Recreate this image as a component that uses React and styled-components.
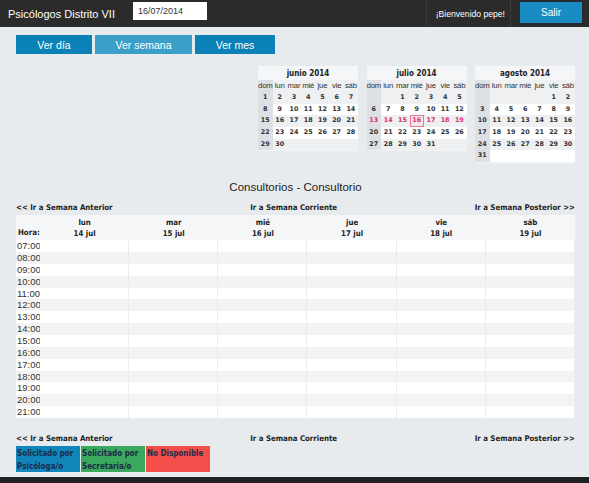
import React from "react";
import styled, { createGlobalStyle, css } from "styled-components";

const GlobalStyle = createGlobalStyle`
  html, body {
    margin: 0;
    padding: 0;
    background: #e8ebee;
    font-family: "Liberation Sans", Arial, sans-serif;
    color: #222;
  }
`;

const months = [
  { title: "junio 2014", offset: 0, days: 30, rows: 5 },
  { title: "julio 2014", offset: 2, days: 31, rows: 5, week: [13, 19], today: 16 },
  { title: "agosto 2014", offset: 5, days: 31, rows: 6 },
];

const weekdays = ["dom", "lun", "mar", "mié", "jue", "vie", "sáb"];

const days = [
  ["lun", "14 jul"],
  ["mar", "15 jul"],
  ["mié", "16 jul"],
  ["jue", "17 jul"],
  ["vie", "18 jul"],
  ["sáb", "19 jul"],
];

const hours = [
  "07:00", "08:00", "09:00", "10:00", "11:00", "12:00", "13:00", "14:00",
  "15:00", "16:00", "17:00", "18:00", "19:00", "20:00", "21:00",
];

const boldSmall = css`
  font-family: "DejaVu Sans", Verdana, sans-serif;
  font-stretch: condensed;
  font-weight: bold;
  font-size: 7.8px;
`;

export default function App() {
  return (
    <Page>
      <GlobalStyle />
      <Header>
        <Brand>Psicólogos Distrito VII</Brand>
        <DateInput defaultValue="16/07/2014" />
        <Welcome>¡Bienvenido pepe!</Welcome>
        <LogoutButton>Salir</LogoutButton>
      </Header>

      <Main>
        <ViewTabs>
          <ViewTab>Ver día</ViewTab>
          <ViewTab $active>Ver semana</ViewTab>
          <ViewTab>Ver mes</ViewTab>
        </ViewTabs>

        <Calendars>
          {months.map((m) => {
            const cells = [];
            for (let i = 0; i < m.rows * 7; i++) {
              const d = i - m.offset + 1;
              cells.push(d >= 1 && d <= m.days ? d : null);
            }
            return (
              <MiniCalendar key={m.title}>
                <CalTitle>{m.title}</CalTitle>
                <CalGrid>
                  {weekdays.map((w) => (
                    <WeekdayCell key={w} $sunday={w === "dom"}>{w}</WeekdayCell>
                  ))}
                  {cells.map((d, i) => {
                    const row = Math.floor(i / 7);
                    const inWeek = m.week && d >= m.week[0] && d <= m.week[1];
                    return (
                      <DayCell
                        key={i}
                        $sunday={i % 7 === 0}
                        $shade={row % 2 === 0}
                        $week={inWeek}
                        $today={d === m.today}
                      >
                        {d}
                      </DayCell>
                    );
                  })}
                </CalGrid>
              </MiniCalendar>
            );
          })}
        </Calendars>

        <SectionTitle>Consultorios - Consultorio</SectionTitle>

        <WeekNav>
          <NavLink>&lt;&lt; Ir a Semana Anterior</NavLink>
          <NavLink>Ir a Semana Corriente</NavLink>
          <NavLink>Ir a Semana Posterior &gt;&gt;</NavLink>
        </WeekNav>

        <Schedule>
          <HeadCell $hour>Hora:</HeadCell>
          {days.map(([name, date]) => (
            <HeadCell key={date}>
              {name}
              <br />
              {date}
            </HeadCell>
          ))}
          {hours.map((h, r) => (
            <React.Fragment key={h}>
              <HourCell $alt={r % 2 === 1}>{h}</HourCell>
              {days.map(([, date]) => (
                <SlotCell key={date} $alt={r % 2 === 1} />
              ))}
            </React.Fragment>
          ))}
        </Schedule>

        <WeekNav $bottom>
          <NavLink>&lt;&lt; Ir a Semana Anterior</NavLink>
          <NavLink>Ir a Semana Corriente</NavLink>
          <NavLink>Ir a Semana Posterior &gt;&gt;</NavLink>
        </WeekNav>

        <Legend>
          <LegendItem $color="#1086bb">Solicitado por Psicóloga/o</LegendItem>
          <LegendItem $color="#3aa95e">Solicitado por Secretaria/o</LegendItem>
          <LegendItem $color="#f44e4b">No Disponible</LegendItem>
        </Legend>
      </Main>

      <Footer />
    </Page>
  );
}

const Page = styled.div`
  display: flex;
  flex-direction: column;
  min-height: 100vh;
`;

const Header = styled.header`
  display: flex;
  align-items: center;
  height: 27px;
  background: #2b2b2b;
  padding-left: 8px;
`;

const Brand = styled.span`
  color: #fff;
  font-size: 11px;
  margin-right: 18px;
`;

const DateInput = styled.input`
  width: 74px;
  height: 18px;
  box-sizing: border-box;
  margin-top: -5px;
  border: none;
  padding: 0 5px;
  font-family: "Liberation Sans", Arial, sans-serif;
  font-size: 9px;
  color: #333;
  background: #fff;
`;

const Welcome = styled.span`
  margin-left: auto;
  align-self: stretch;
  display: flex;
  align-items: center;
  padding: 0 5px 0 9px;
  border-left: 1px solid #3b3b3b;
  border-right: 1px solid #3b3b3b;
  color: #fff;
  font-size: 8.6px;
`;

const LogoutButton = styled.button`
  width: 62px;
  height: 21px;
  margin: -2px 7px 0 9px;
  border: none;
  background: #1a8cc4;
  color: #fff;
  font-family: "Liberation Sans", Arial, sans-serif;
  font-size: 10px;
`;

const Main = styled.main`
  padding: 0 14px 0 16px;
`;

const ViewTabs = styled.div`
  display: flex;
  gap: 3px;
  margin-top: 8px;
`;

const ViewTab = styled.button`
  height: 19px;
  padding: 0;
  border: none;
  color: #fff;
  font-family: "Liberation Sans", Arial, sans-serif;
  font-size: 10.5px;
  background: #0b82b7;
  width: 76px;
  ${(p) =>
    p.$active &&
    css`
      background: #3a9fc9;
      width: 97px;
    `}
  &:last-child {
    width: 80px;
  }
`;

const Calendars = styled.div`
  display: flex;
  justify-content: flex-end;
  align-items: flex-start;
  gap: 8.5px;
  margin-top: 12px;
`;

const MiniCalendar = styled.div`
  width: 100px;
  background: #f1f3f5;
  padding-bottom: 1px;
`;

const CalTitle = styled.div`
  height: 14px;
  line-height: 15px;
  text-align: center;
  font-family: "DejaVu Sans", Verdana, sans-serif;
  font-stretch: condensed;
  font-weight: bold;
  font-size: 8px;
  color: #222;
  background: #f5f6f7;
`;

const CalGrid = styled.div`
  display: grid;
  grid-template-columns: repeat(7, 1fr);
`;

const WeekdayCell = styled.div`
  height: 12px;
  line-height: 12px;
  text-align: center;
  font-size: 7.8px;
  letter-spacing: -0.2px;
  white-space: nowrap;
  color: #333;
  background: ${(p) => (p.$sunday ? "#dde1e5" : "#eef0f2")};
`;

const DayCell = styled.div`
  height: 11.7px;
  line-height: 11.7px;
  box-sizing: border-box;
  text-align: center;
  font-family: "DejaVu Sans", Verdana, sans-serif;
  font-weight: bold;
  font-size: 6.4px;
  color: ${(p) => (p.$week ? "#e0306a" : "#333")};
  background: ${(p) => (p.$sunday ? "#dde1e5" : p.$shade ? "#eef0f2" : "#fff")};
  ${(p) =>
    p.$today &&
    css`
      border: 1px solid #e07a94;
      background: #f3e6ea;
      line-height: 9.7px;
    `}
`;

const SectionTitle = styled.h2`
  margin: 18px 0 0;
  text-align: center;
  font-size: 11.5px;
  font-weight: normal;
  color: #222;
`;

const WeekNav = styled.div`
  display: flex;
  justify-content: space-between;
  margin-top: ${(p) => (p.$bottom ? "15px" : "9px")};
  height: 11px;
  line-height: 11px;
`;

const NavLink = styled.a`
  ${boldSmall};
  color: #222;
  cursor: pointer;
`;

const Schedule = styled.div`
  display: grid;
  grid-template-columns: 24px repeat(6, 1fr);
  margin-top: 2px;
`;

const HeadCell = styled.div`
  height: 25px;
  box-sizing: border-box;
  padding-top: 2px;
  background: #f5f6f7;
  text-align: center;
  ${boldSmall};
  line-height: 11px;
  color: #222;
  ${(p) =>
    p.$hour &&
    css`
      display: flex;
      align-items: flex-end;
      padding: 0 0 2px 2px;
      text-align: left;
    `}
`;

const HourCell = styled.div`
  height: 11.86px;
  line-height: 12px;
  padding-left: 1px;
  font-size: 9.5px;
  color: #333;
  background: ${(p) => (p.$alt ? "#f3f3f3" : "#fff")};
`;

const SlotCell = styled.div`
  height: 11.86px;
  border-right: 1px solid #ececec;
  background: ${(p) => (p.$alt ? "#f3f3f3" : "#fff")};
  &:nth-child(7n + 1) {
    border-right: none;
  }
`;

const Legend = styled.div`
  display: flex;
  gap: 1px;
  margin-top: 2px;
`;

const LegendItem = styled.div`
  width: 64px;
  height: 26px;
  padding: 1px 1px 0;
  box-sizing: border-box;
  background: ${(p) => p.$color};
  ${boldSmall};
  font-size: 8px;
  line-height: 13px;
  color: #1d2a4a;
`;

const Footer = styled.footer`
  margin-top: auto;
  height: 6px;
  background: #222;
`;
